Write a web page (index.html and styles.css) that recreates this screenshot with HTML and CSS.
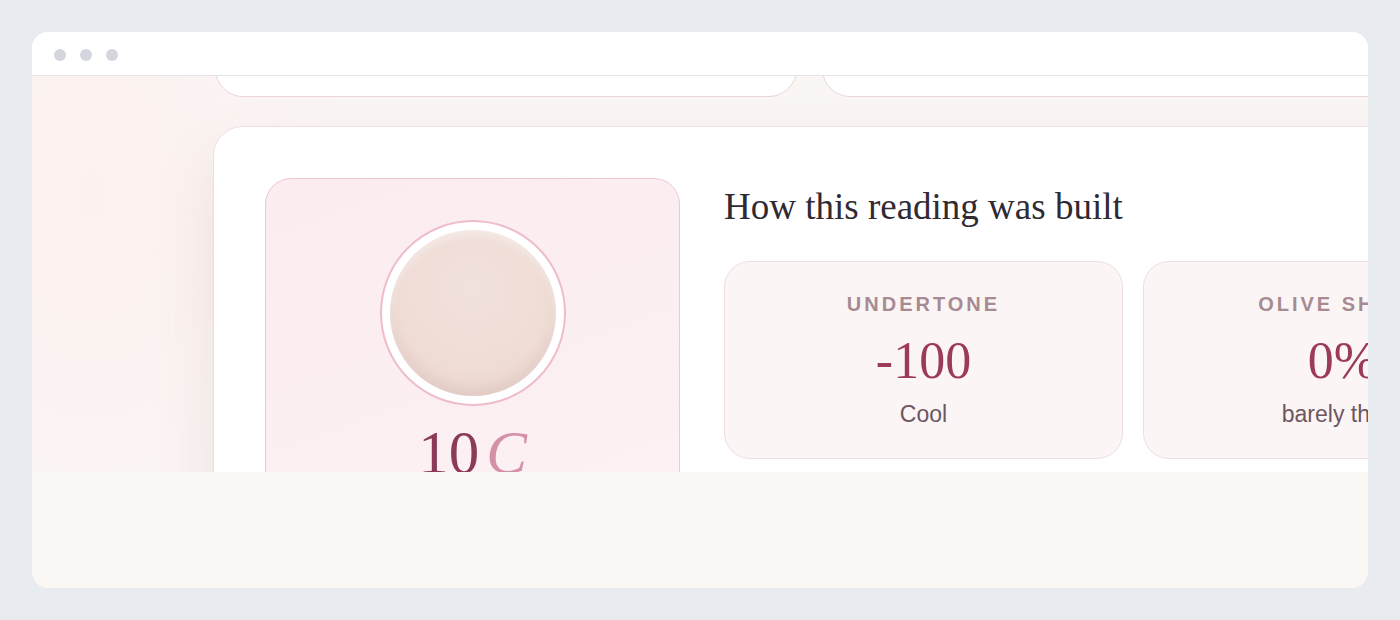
FILE: index.html
```html
<!DOCTYPE html>
<html lang="en">
<head>
  <meta charset="UTF-8" />
  <meta name="viewport" content="width=device-width, initial-scale=1.0" />
  <title>Shade Reading</title>
  <link rel="stylesheet" href="styles.css">
</head>
<body>
  <div class="window">
    <div class="titlebar">
      <span class="dot"></span>
      <span class="dot"></span>
      <span class="dot"></span>
    </div>
    <div class="viewport">
      <div class="page">
        <div class="top-row">
          <div class="top-card"></div>
          <div class="top-card"></div>
        </div>

        <div class="reading-card">
          <div class="shade-panel">
            <div class="swatch-ring">
              <div class="swatch"></div>
            </div>
            <div class="shade-code">10<span class="shade-letter">C</span></div>
          </div>

          <div class="breakdown">
            <h2>How this reading was built</h2>
            <div class="stats">
              <div class="stat">
                <div class="stat-label">Undertone</div>
                <div class="stat-value">-100</div>
                <div class="stat-note">Cool</div>
              </div>
              <div class="stat">
                <div class="stat-label">Olive Shade</div>
                <div class="stat-value">0%</div>
                <div class="stat-note">barely there</div>
              </div>
            </div>
          </div>
        </div>
      </div>
    </div>
  </div>
</body>
</html>
```

FILE: styles.css
```css
/* Reset & Base */
* { margin: 0; padding: 0; box-sizing: border-box; }
body { background: #e8ebf0; padding: 32px; font-family: "Liberation Sans", Arial, sans-serif; color: #2f2a33; }

/* Browser frame */
.window { width: 1336px; height: 556px; border-radius: 16px; overflow: hidden; background: #faf7f4; }
.titlebar { height: 44px; background: #fff; border-bottom: 1px solid #e2e4e9; display: flex; align-items: center; gap: 14px; padding: 2px 0 0 22px; }
.dot { width: 12px; height: 12px; border-radius: 50%; background: #d3d6dd; }

/* Page viewport */
.viewport { height: 396px; overflow: hidden; background: radial-gradient(ellipse 260px 420px at 60px 120px, #fcf1ef 0%, rgba(252,241,239,0) 100%), #faf6f4; }
.page { padding-left: 181px; margin-top: -99px; }

/* Top cards (scrolled past) */
.top-row { display: flex; gap: 25px; padding-left: 2px; }
.top-card { flex: 0 0 582px; height: 120px; background: #fff; border: 1px solid #ead3da; border-radius: 28px; }

/* Reading card */
.reading-card { margin-top: 29px; width: 1300px; background: #fff; border: 1px solid #efdfe3; border-radius: 30px; padding: 51px 0 0 51px; display: flex; gap: 44px; box-shadow: 0 28px 60px rgba(150, 90, 105, 0.13); }

.shade-panel { flex: 0 0 415px; height: 420px; border: 1.5px solid #f1c6d2; border-radius: 26px; background: linear-gradient(160deg, #fbecef 0%, #fcf2f4 100%); display: flex; flex-direction: column; align-items: center; padding-top: 41px; }
.swatch-ring { width: 186px; height: 186px; border-radius: 50%; border: 2px solid #efbccb; background: #fff; padding: 8px; }
.swatch { width: 100%; height: 100%; border-radius: 50%; background: radial-gradient(circle at 50% 35%, #f2e2dc 0%, #efdcd5 60%, #e6cfc8 100%); box-shadow: inset 0 -6px 12px rgba(140, 90, 90, 0.10), inset 0 4px 8px rgba(255, 255, 255, 0.5); }
.shade-code { margin-top: 16px; font-family: "Liberation Serif", "Times New Roman", serif; font-size: 61px; line-height: 1; color: #8b3b58; }
.shade-letter { font-style: italic; color: #d490a7; margin-left: 7px; }

/* Breakdown */
.breakdown { flex: 1; }
.breakdown h2 { margin-top: 7px; font-family: "Liberation Serif", "Times New Roman", serif; font-weight: normal; font-size: 37px; line-height: 1.2; color: #2f2a33; }
.stats { margin-top: 32px; display: flex; gap: 20px; }
.stat { flex: 0 0 399px; height: 198px; background: #fbf6f5; border: 1px solid #f0dde1; border-radius: 26px; text-align: center; padding-top: 31px; }
.stat-label { font-size: 20px; line-height: 1.15; font-weight: bold; letter-spacing: 3px; text-transform: uppercase; color: #a88a93; }
.stat-value { margin-top: 16px; font-family: "Liberation Serif", "Times New Roman", serif; font-size: 52px; line-height: 1.1; color: #9b3b58; }
.stat-note { margin-top: 11px; font-size: 23px; line-height: 1.2; color: #6f5561; }
```
